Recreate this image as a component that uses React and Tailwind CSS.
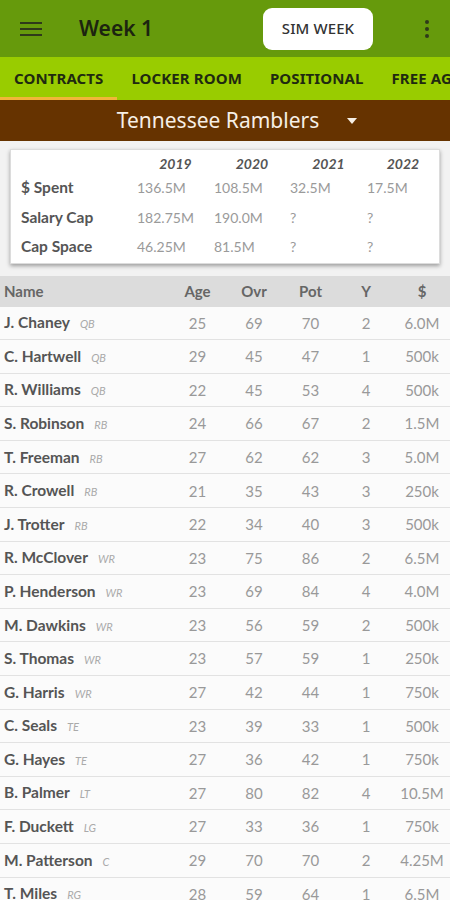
import { useState } from 'react';

const years = ['2019', '2020', '2021', '2022'];

const finances = [
  { label: '$ Spent', values: ['136.5M', '108.5M', '32.5M', '17.5M'] },
  { label: 'Salary Cap', values: ['182.75M', '190.0M', '?', '?'] },
  { label: 'Cap Space', values: ['46.25M', '81.5M', '?', '?'] },
];

const players = [
  ['J. Chaney', 'QB', 25, 69, 70, 2, '6.0M'],
  ['C. Hartwell', 'QB', 29, 45, 47, 1, '500k'],
  ['R. Williams', 'QB', 22, 45, 53, 4, '500k'],
  ['S. Robinson', 'RB', 24, 66, 67, 2, '1.5M'],
  ['T. Freeman', 'RB', 27, 62, 62, 3, '5.0M'],
  ['R. Crowell', 'RB', 21, 35, 43, 3, '250k'],
  ['J. Trotter', 'RB', 22, 34, 40, 3, '500k'],
  ['R. McClover', 'WR', 23, 75, 86, 2, '6.5M'],
  ['P. Henderson', 'WR', 23, 69, 84, 4, '4.0M'],
  ['M. Dawkins', 'WR', 23, 56, 59, 2, '500k'],
  ['S. Thomas', 'WR', 23, 57, 59, 1, '250k'],
  ['G. Harris', 'WR', 27, 42, 44, 1, '750k'],
  ['C. Seals', 'TE', 23, 39, 33, 1, '500k'],
  ['G. Hayes', 'TE', 27, 36, 42, 1, '750k'],
  ['B. Palmer', 'LT', 27, 80, 82, 4, '10.5M'],
  ['F. Duckett', 'LG', 27, 33, 36, 1, '750k'],
  ['M. Patterson', 'C', 29, 70, 70, 2, '4.25M'],
  ['T. Miles', 'RG', 28, 59, 64, 1, '6.5M'],
];

const tabs = ['CONTRACTS', 'LOCKER ROOM', 'POSITIONAL', 'FREE AGENTS'];

function TopBar() {
  return (
    <div className="h-[57px] bg-[#669a0c] flex items-center pl-[20px] pr-[21px]">
      <svg width="22" height="16" viewBox="0 0 22 16" className="shrink-0">
        <rect x="0" y="1" width="22" height="2" fill="#2f3a1a" />
        <rect x="0" y="7" width="22" height="2" fill="#2f3a1a" />
        <rect x="0" y="13" width="22" height="2" fill="#2f3a1a" />
      </svg>
      <div className="ml-[37px] text-[21px] font-semibold text-[#1c2410] font-['Noto_Sans',sans-serif]">Week 1</div>
      <div className="flex-1" />
      <button className="h-[42px] w-[110px] bg-white rounded-[9px] text-[15px] font-medium text-[#333] font-['Noto_Sans',sans-serif] tracking-[0.1px]">
        SIM WEEK
      </button>
      <div className="ml-[52px] flex flex-col gap-[3px] items-center">
        <span className="w-[4px] h-[4px] rounded-full bg-[#2f3a1a]" />
        <span className="w-[4px] h-[4px] rounded-full bg-[#2f3a1a]" />
        <span className="w-[4px] h-[4px] rounded-full bg-[#2f3a1a]" />
      </div>
    </div>
  );
}

function Tabs() {
  const [active, setActive] = useState(0);
  return (
    <div className="h-[43px] bg-[#99cc00] flex overflow-hidden whitespace-nowrap">
      {tabs.map((t, i) => (
        <div
          key={t}
          onClick={() => setActive(i)}
          className={
            'h-full flex items-center px-[14px] text-[15px] font-bold text-[#1f2a10] font-["Noto_Sans",sans-serif] tracking-[0.1px] shrink-0 pt-[3px] ' +
            (i === active ? 'border-b-[3px] border-[#f0b63a]' : 'border-b-[3px] border-transparent')
          }
        >
          {t}
        </div>
      ))}
    </div>
  );
}

function TeamHeader() {
  return (
    <div className="h-[41px] bg-[#663300] flex items-center justify-center relative font-['Noto_Sans',sans-serif]">
      <span className="text-[21px] text-[#f6efe6] ml-[-14px]">Tennessee Ramblers</span>
      <svg width="10" height="6" viewBox="0 0 10 6" className="absolute left-[347px] top-[18px]">
        <path d="M0 0 L10 0 L5 6 Z" fill="#f6efe6" />
      </svg>
    </div>
  );
}

function FinanceCard() {
  return (
    <div className="bg-[#f2f2f2] px-[10px] pt-[8px] pb-[12px] font-['Lato',sans-serif]">
      <div className="bg-white border border-[#dcdcdc] shadow-[0_2px_4px_rgba(0,0,0,0.35)] pt-[3px] pb-[1px]">
        <div className="grid grid-cols-[126px_77px_76px_77px_1fr] h-[20px] items-center">
          <div />
          {years.map((y) => (
            <div key={y} className="text-center text-[14px] italic font-bold text-[#555]">{y}</div>
          ))}
        </div>
        {finances.map((row) => (
          <div key={row.label} className="grid grid-cols-[126px_77px_76px_77px_1fr] h-[29.5px] items-center">
            <div className="pl-[10px] text-[15.5px] font-bold text-[#555]">{row.label}</div>
            {row.values.map((v, i) => (
              <div key={i} className="text-[14px] text-[#9a9a9a]">{v}</div>
            ))}
          </div>
        ))}
      </div>
    </div>
  );
}

function PlayerTable() {
  return (
    <div className="font-['Lato',sans-serif]">
      <div className="grid grid-cols-[170px_55px_58px_55px_56px_1fr] h-[31px] items-center bg-[#dcdcdc] text-[15px] font-bold text-[#666]">
        <div className="pl-[4px]">Name</div>
        <div className="text-center">Age</div>
        <div className="text-center">Ovr</div>
        <div className="text-center">Pot</div>
        <div className="text-center">Y</div>
        <div className="text-center">$</div>
      </div>
      {players.map(([name, pos, age, ovr, pot, y, pay]) => (
        <div
          key={name}
          className="grid grid-cols-[170px_55px_58px_55px_56px_1fr] h-[33.6px] items-center bg-[#fbfbfb] border-b border-[#e2e2e2] text-[15px] text-[#999]"
        >
          <div className="pl-[4px] whitespace-nowrap">
            <span className="font-bold text-[#555] text-[15.5px]">{name}</span>
            <span className="ml-[10px] italic text-[11px] text-[#aaa]">{pos}</span>
          </div>
          <div className="text-center">{age}</div>
          <div className="text-center">{ovr}</div>
          <div className="text-center">{pot}</div>
          <div className="text-center">{y}</div>
          <div className="text-center">{pay}</div>
        </div>
      ))}
    </div>
  );
}

export default function App() {
  return (
    <div className="w-[450px] h-[900px] overflow-hidden bg-[#fbfbfb]">
      <TopBar />
      <Tabs />
      <TeamHeader />
      <FinanceCard />
      <PlayerTable />
    </div>
  );
}
